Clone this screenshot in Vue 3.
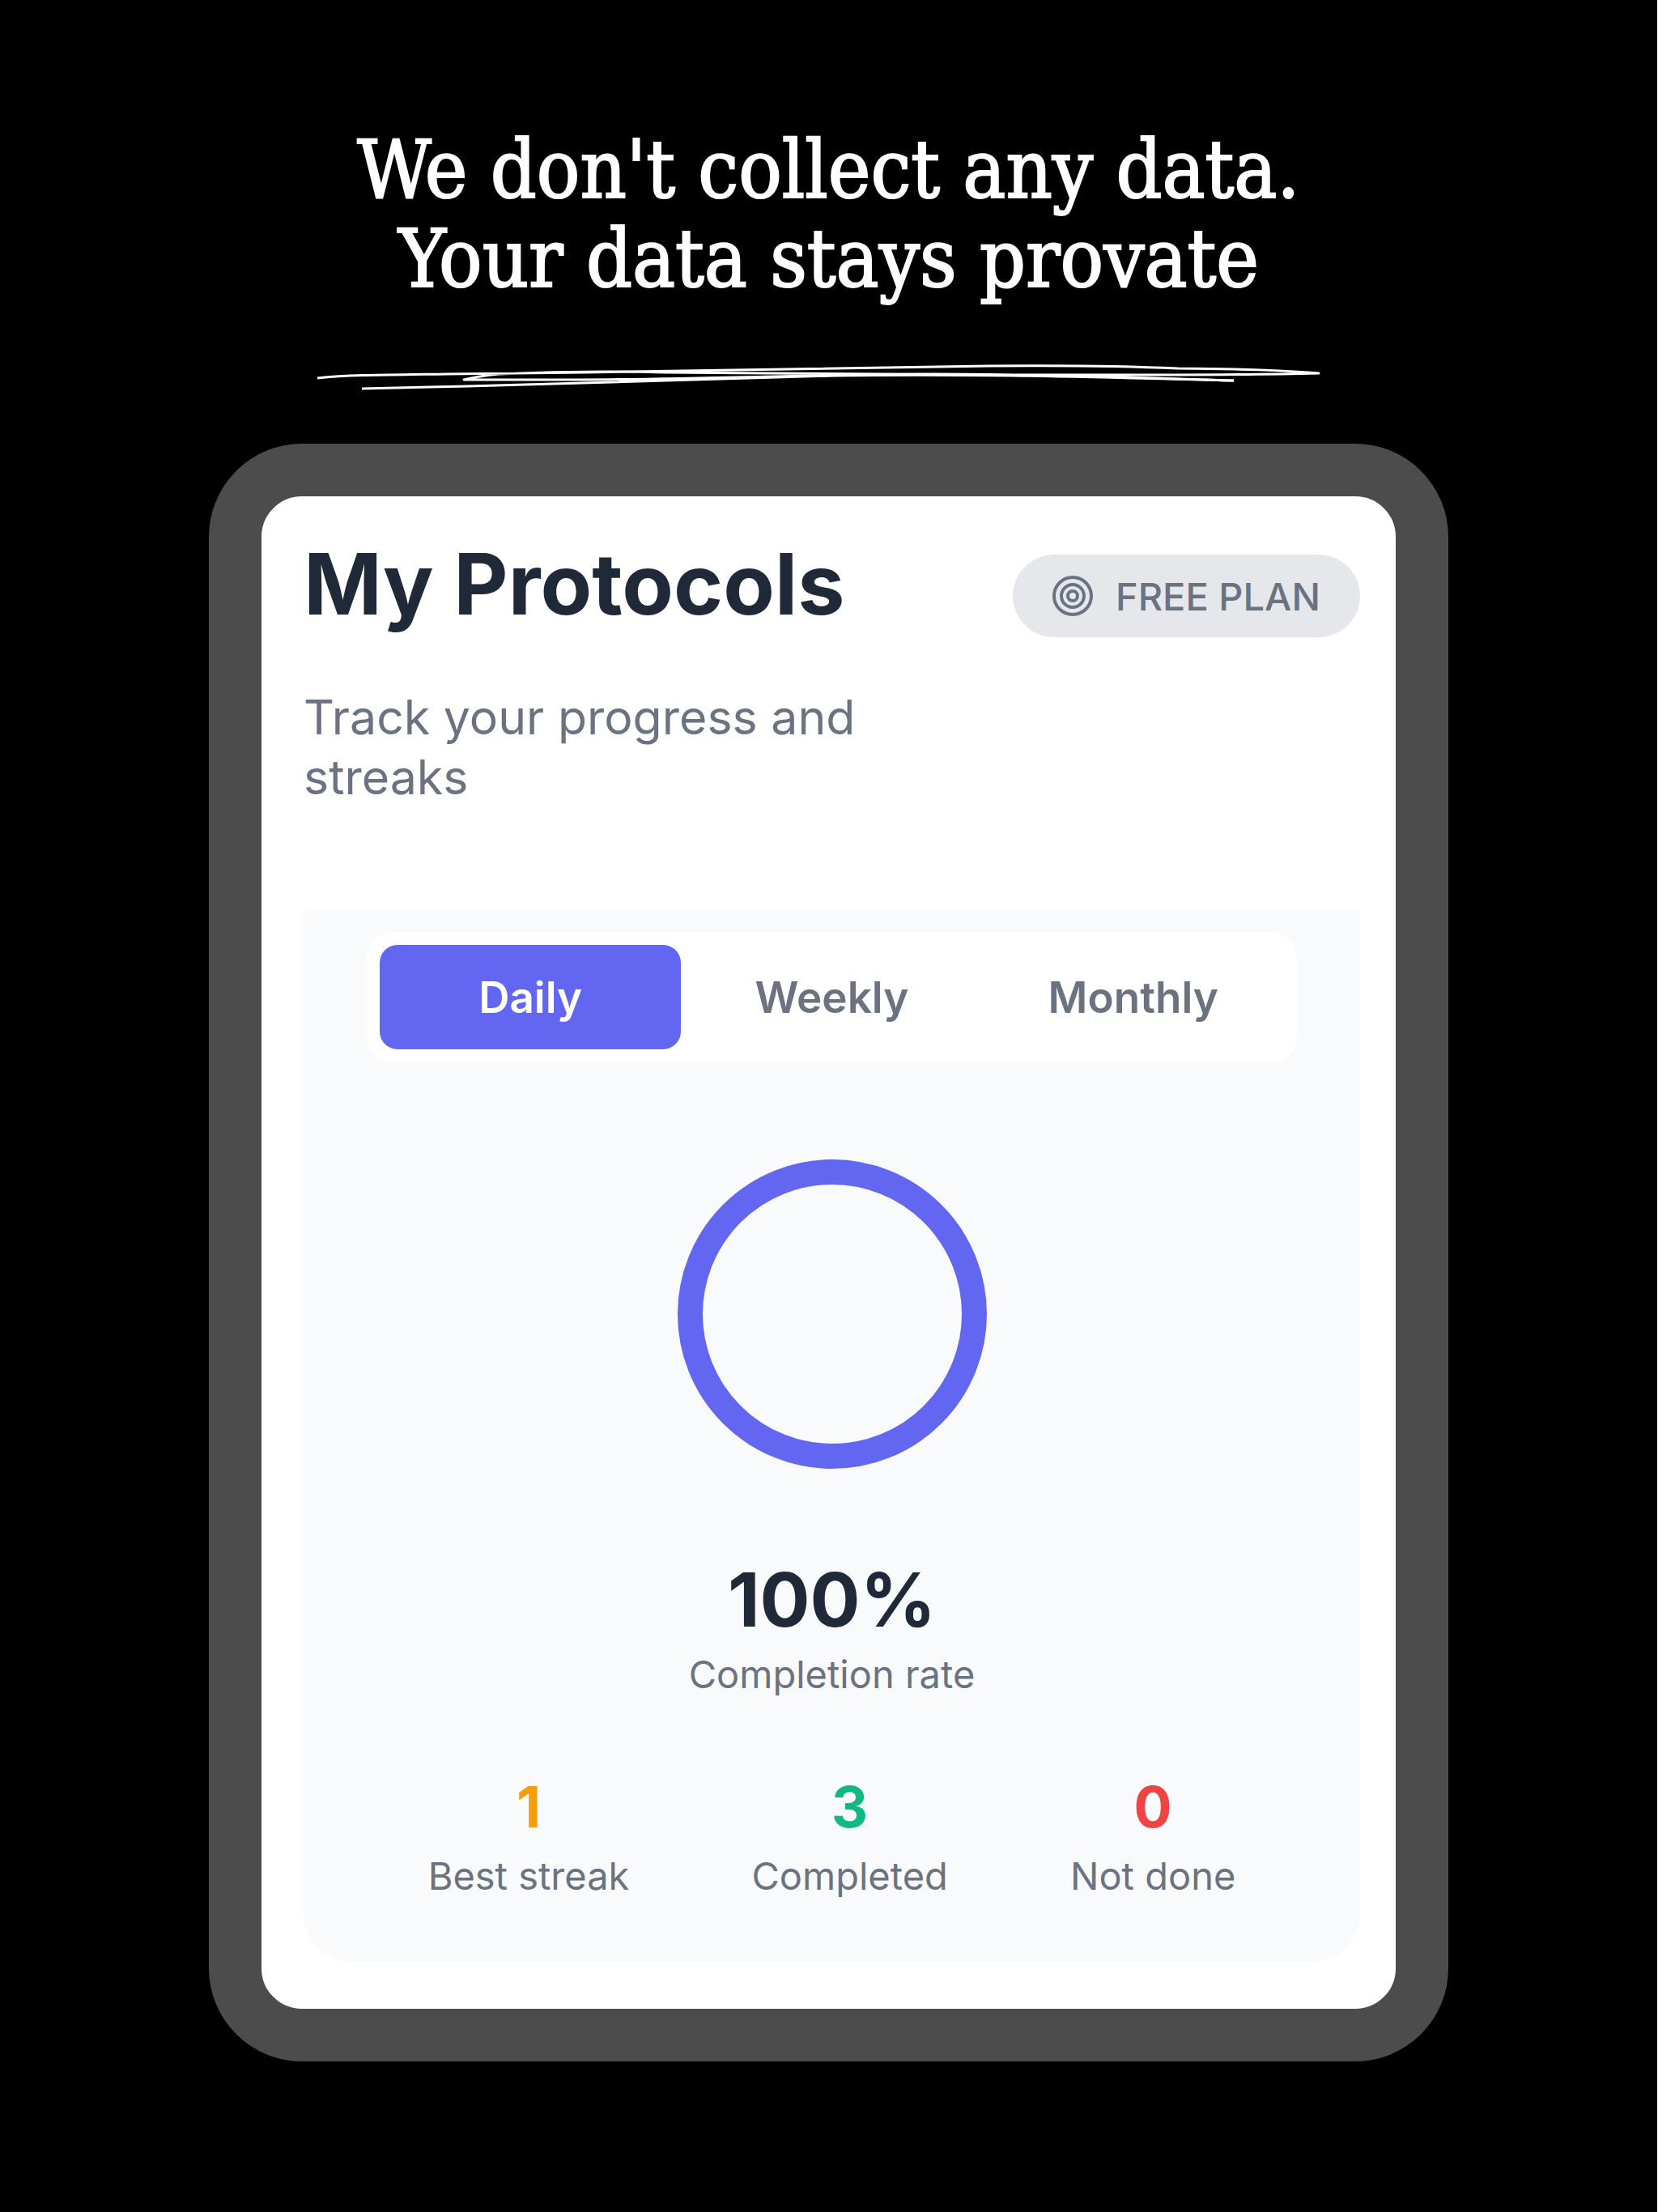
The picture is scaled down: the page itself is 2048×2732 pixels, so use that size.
<script setup>
import { ref } from 'vue'

const periods = ['Daily', 'Weekly', 'Monthly']
const active = ref('Daily')
const stats = [
  { value: 1, label: 'Best streak', tone: 'amber' },
  { value: 3, label: 'Completed', tone: 'green' },
  { value: 0, label: 'Not done', tone: 'red' },
]
</script>

<template>
  <main class="page">
    <h1 class="headline">We don't collect any data.<br />Your data stays provate</h1>

    <svg class="scribble" viewBox="0 0 1240 32" aria-hidden="true">
      <path d="M1 17 C40 13 80 13 160 12 L330 10 C560 6 700 3 830 2 C930 1 1000 2 1064 5 C1150 6 1190 7 1238 11 C1120 14 1000 13 850 13 C700 12 560 11 430 10 C350 8 270 10 225 12 C205 14 190 17 182 19 L330 19 C480 18 600 13 740 12 C850 11 1000 16 1133 20" />
      <path d="M56 30 C260 26 480 18 640 14 C820 11 1000 17 1133 20" />
    </svg>

    <section class="frame">
      <header class="top">
        <div class="intro">
          <h2 class="title">My Protocols</h2>
          <p class="subtitle">Track your progress and streaks</p>
        </div>
        <div class="badge">
          <svg class="target" viewBox="0 0 50 50" aria-hidden="true">
            <circle cx="25" cy="25" r="23" />
            <circle cx="25" cy="25" r="14" />
            <circle cx="25" cy="25" r="6" />
          </svg>
          <span>FREE PLAN</span>
        </div>
      </header>

      <div class="card">
        <div class="tabs">
          <button
            v-for="p in periods"
            :key="p"
            type="button"
            class="tab"
            :class="{ active: p === active }"
            :aria-pressed="p === active"
            @click="active = p"
          >{{ p }}</button>
        </div>

        <div class="ring"></div>
        <div class="rate">100%</div>
        <div class="caption">Completion rate</div>

        <div class="stats">
          <div v-for="s in stats" :key="s.label" class="stat">
            <div class="number" :class="s.tone">{{ s.value }}</div>
            <div class="caption">{{ s.label }}</div>
          </div>
        </div>
      </div>
    </section>
  </main>
</template>

<style>
body {
  background: #000;
}
</style>

<style scoped>
.page {
  box-sizing: border-box;
  min-height: 100vh;
  padding: 155px 12.6% 180px;
  border-right: 1px solid #fff;
  background: #000;
  font-family: Inter, "Liberation Sans", sans-serif;
  display: flex;
  flex-direction: column;
  align-items: center;
}
.headline {
  margin: 0;
  color: #fff;
  font: 400 99px/110px "DejaVu Serif Condensed", "DejaVu Serif", serif;
  -webkit-text-stroke: 2px #fff;
  text-align: center;
}
.scribble {
  width: 81%;
  margin: 75px 24px 66px 0;
  fill: none;
  stroke: #fff;
  stroke-width: 3;
  stroke-linejoin: round;
}
.frame {
  box-sizing: border-box;
  width: 100%;
  padding: 52px 44px 58px 52px;
  border: 65px solid #4c4c4c;
  border-radius: 115px;
  background: #fff;
}
.top {
  display: flex;
  justify-content: space-between;
  align-items: flex-start;
}
.intro {
  width: 740px;
}
.title {
  margin: 0;
  font-size: 104px;
  line-height: 112px;
  font-weight: 700;
  color: #1f2937;
}
.subtitle {
  margin: 72px 0 0;
  font-size: 59px;
  line-height: 74px;
  color: #6b7280;
}
.badge {
  display: flex;
  align-items: center;
  gap: 28px;
  box-sizing: border-box;
  height: 102px;
  margin-top: 20px;
  padding: 0 49px;
  border-radius: 51px;
  background: #e5e7eb;
  color: #6b7280;
  font-size: 47px;
  font-weight: 500;
  white-space: nowrap;
}
.target {
  width: 50px;
  height: 50px;
  fill: none;
  stroke: currentColor;
  stroke-width: 4;
}
.card {
  display: flex;
  flex-direction: column;
  align-items: center;
  margin-top: 126px;
  padding: 28px 78px 70px;
  border-radius: 0 0 60px 60px;
  background: #f9fafb;
}
.tabs {
  display: flex;
  align-self: stretch;
  padding: 16px;
  border-radius: 32px;
  background: #fff;
}
.tab {
  flex: 1;
  height: 129px;
  padding: 0;
  border: 0;
  border-radius: 22px;
  background: none;
  color: #6b7280;
  font: 600 53px/64px Inter, "Liberation Sans", sans-serif;
}
.tab.active {
  background: #6366f1;
  color: #fff;
}
.ring {
  box-sizing: border-box;
  width: 382px;
  height: 382px;
  margin-top: 120px;
  border: 31px solid #6366f1;
  border-radius: 50%;
}
.rate {
  margin-top: 106px;
  font-size: 92px;
  line-height: 112px;
  font-weight: 700;
  color: #1f2937;
}
.caption {
  font-size: 47px;
  line-height: 72px;
  color: #6b7280;
}
.stats {
  display: flex;
  justify-content: space-around;
  align-self: stretch;
  margin-top: 84px;
}
.stat {
  text-align: center;
}
.number {
  font-size: 70px;
  line-height: 88px;
  font-weight: 700;
}
.number + .caption {
  margin-top: 5px;
}
.amber { color: #f59e0b; }
.green { color: #10b981; }
.red { color: #ef4444; }
</style>
